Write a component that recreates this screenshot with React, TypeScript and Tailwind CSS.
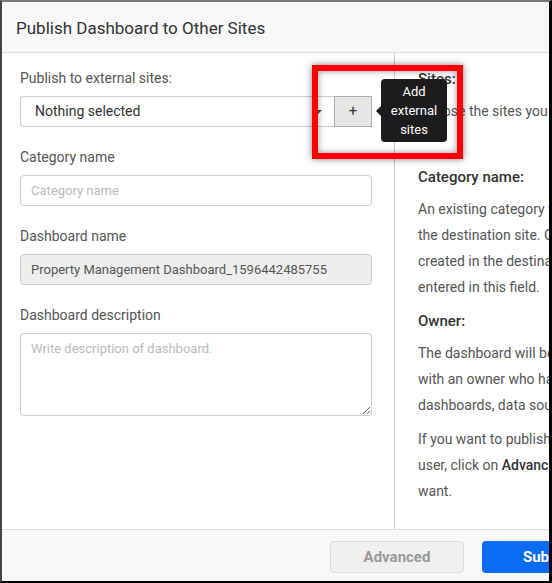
export default function App() {
    const fieldLabel = "text-[14px] leading-[20px] text-[#555] mb-[8px]";
    const heading = "text-[15px] font-medium text-[#333] leading-[26px] mb-[6px]";
    const para = "text-[14px] leading-[26px] text-[#555] whitespace-nowrap";

    return (
        <div className="relative w-[552px] h-[583px] overflow-hidden bg-white border-t-2 border-l-2 border-r-[3px] border-b-2 border-t-[#7a7a7a] border-l-[#444] border-r-black border-b-black font-['Roboto',sans-serif]">
            <div className="w-[800px] h-full flex flex-col">
                {/* Header */}
                <div className="h-[51px] shrink-0 bg-[#f8f8f8] border-b border-[#ddd] flex items-center px-[14px] pt-[3px]">
                    <h1 className="text-[17px] text-[#333]">Publish Dashboard to Other Sites</h1>
                </div>

                {/* Body */}
                <div className="flex flex-1 min-h-0">
                    {/* Form */}
                    <div className="w-[393px] shrink-0 border-r border-[#ccc] pl-[18px] pr-[22px] pt-[15px]">
                        <div className="mb-[20px]">
                            <div className={fieldLabel}>Publish to external sites:</div>
                            <div className="flex h-[31px]">
                                <div className="flex-1 flex items-center justify-between border border-[#ccc] border-r-0 rounded-l-[4px] pl-[14px] pr-[12px]">
                                    <span className="text-[14px] text-[#333]">Nothing selected</span>
                                    <span className="w-0 h-0 border-l-[4px] border-r-[4px] border-t-[4px] border-l-transparent border-r-transparent border-t-[#444]" />
                                </div>
                                <button className="w-[38px] border border-[#adadad] bg-[#e6e6e6] text-[#333] text-[15px] leading-none">+</button>
                            </div>
                        </div>

                        <div className="mb-[20px]">
                            <div className={fieldLabel}>Category name</div>
                            <input
                                placeholder="Category name"
                                className="w-full h-[31px] border border-[#ccc] rounded-[4px] px-[10px] text-[13px] text-[#333] placeholder:text-[#bbb] outline-none"
                            />
                        </div>

                        <div className="mb-[20px]">
                            <div className={fieldLabel}>Dashboard name</div>
                            <input
                                readOnly
                                value="Property Management Dashboard_1596442485755"
                                className="w-full h-[31px] border border-[#ccc] rounded-[4px] px-[10px] text-[13px] text-[#555] bg-[#eee] outline-none"
                            />
                        </div>

                        <div>
                            <div className={fieldLabel}>Dashboard description</div>
                            <textarea
                                placeholder="Write description of dashboard."
                                className="block w-full h-[83px] border border-[#ccc] rounded-[4px] px-[10px] py-[5px] text-[13px] text-[#333] placeholder:text-[#bbb] outline-none resize-y"
                            />
                        </div>
                    </div>

                    {/* Help text */}
                    <div className="flex-1 pl-[23px] pt-[13px]">
                        <div className={heading}>Sites:</div>
                        <p className={`${para} mb-[14px]`}>
                            Choose the sites you want to publish the dashboard<br />to.
                        </p>

                        <div className={heading}>Category name:</div>
                        <p className={`${para} mb-[8px]`}>
                            An existing category will be used if it exists in<br />
                            the destination site. Otherwise, a new category is<br />
                            created in the destination site with the name<br />
                            entered in this field.
                        </p>

                        <div className={heading}>Owner:</div>
                        <p className={`${para} mb-[8px]`}>
                            The dashboard will be published to the sites<br />
                            with an owner who has permission to create<br />
                            dashboards, data sources and categories.
                        </p>

                        <p className={para}>
                            If you want to publish with a different owner<br />
                            user, click on <span className="text-[#333] font-medium">Advanced</span> and choose the owner you<br />
                            want.
                        </p>
                    </div>
                </div>

                {/* Footer */}
                <div className="h-[52px] shrink-0 bg-[#f8f8f8] border-t border-[#ddd] flex items-start pt-[11px] pl-[328px] gap-[18px]">
                    <button className="w-[134px] h-[32px] bg-[#f0f0f0] border border-[#ddd] rounded-[4px] text-[15px] font-bold text-[#999]">Advanced</button>
                    <button className="w-[130px] h-[32px] bg-[#0a6cf5] rounded-[4px] text-[15px] font-bold text-white">Submit</button>
                </div>
            </div>

            {/* Tooltip */}
            <div className="absolute left-[379px] top-[77px] w-[66px] h-[63px] bg-[#1c1c1c] rounded-[4px] flex flex-col items-center justify-center text-white text-[13px] leading-[19px] text-center">
                <span className="absolute -left-[5px] top-[27px] w-0 h-0 border-t-[5px] border-b-[5px] border-r-[5px] border-t-transparent border-b-transparent border-r-[#1c1c1c]" />
                <span>Add</span>
                <span>external</span>
                <span>sites</span>
            </div>

            {/* Annotation box */}
            <div className="absolute left-[310px] top-[63px] w-[151px] h-[94px] border-[6px] border-[#ff0000] shadow-[0_0_7px_rgba(0,0,0,0.5),inset_0_0_7px_rgba(0,0,0,0.4)]" />
        </div>
    );
}
